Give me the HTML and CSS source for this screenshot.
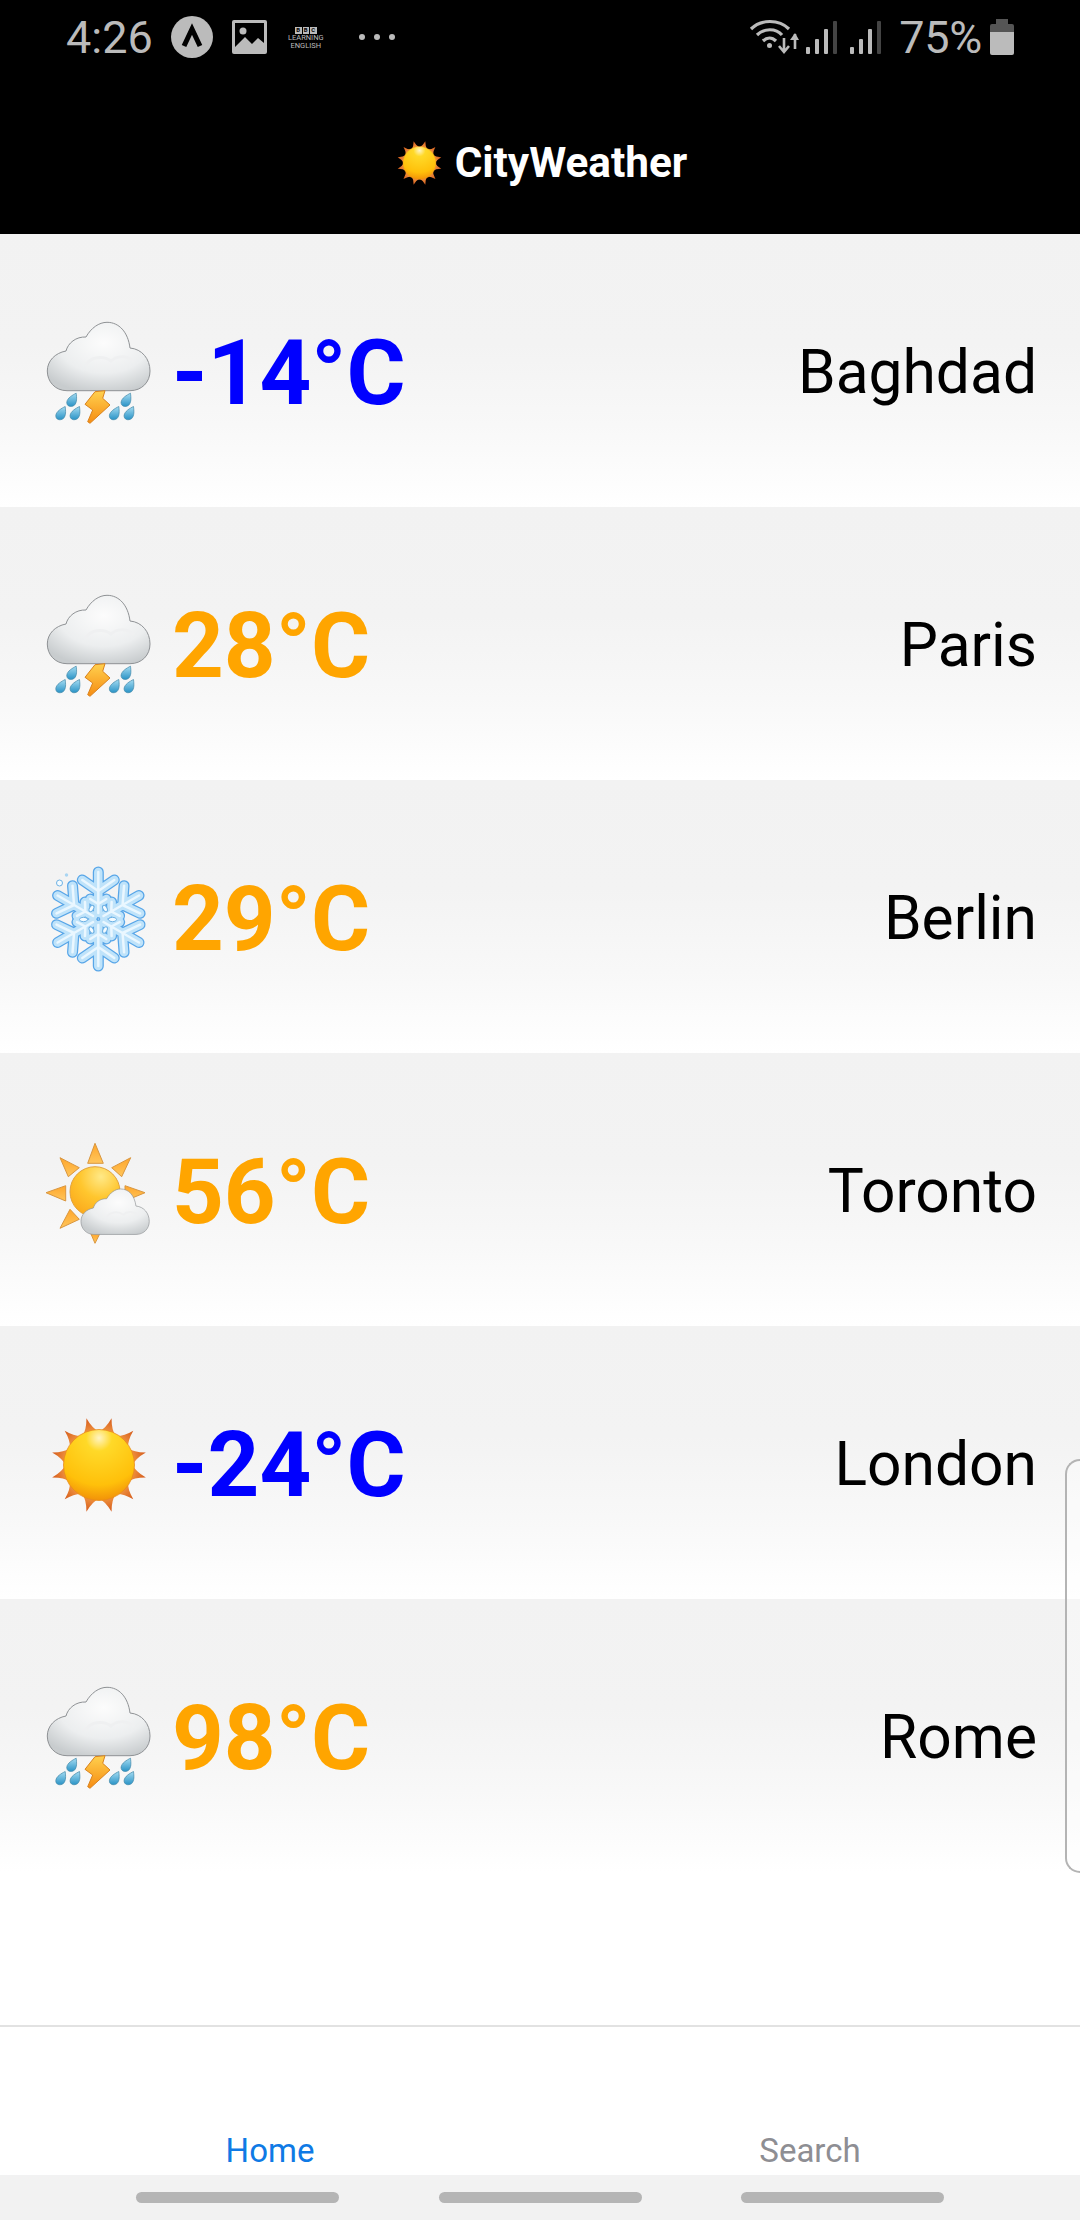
FILE: index.html
```html
<!DOCTYPE html>
<html lang="en">
<head>
<meta charset="utf-8">
<title>CityWeather</title>
<link rel="stylesheet" href="styles.css">
</head>
<body>
<svg class="defs" width="0" height="0" aria-hidden="true">
  <defs>
    <radialGradient id="cloudFill" cx="55%" cy="30%" r="74%">
      <stop offset="0" stop-color="#fcfcfc"/>
      <stop offset=".6" stop-color="#eceeef"/>
      <stop offset="1" stop-color="#c8ccce"/>
    </radialGradient>
    <linearGradient id="dropFill" x1="0" y1="0" x2="0" y2="1">
      <stop offset="0" stop-color="#a5dcf2"/>
      <stop offset="1" stop-color="#2a93c6"/>
    </linearGradient>
    <linearGradient id="boltFill" x1="0" y1="0" x2="0" y2="1">
      <stop offset="0" stop-color="#ffd14f"/>
      <stop offset="1" stop-color="#f68c12"/>
    </linearGradient>
    <radialGradient id="sunFill" cx="50%" cy="12%" r="92%">
      <stop offset="0" stop-color="#fff4c4"/>
      <stop offset=".2" stop-color="#ffd928"/>
      <stop offset=".72" stop-color="#ffc00a"/>
      <stop offset="1" stop-color="#f08a08"/>
    </radialGradient>
    <radialGradient id="sunPale" cx="62%" cy="20%" r="85%">
      <stop offset="0" stop-color="#ffe987"/>
      <stop offset=".5" stop-color="#ffc62e"/>
      <stop offset="1" stop-color="#fba91c"/>
    </radialGradient>
    <linearGradient id="rayFill" x1="0" y1="0" x2="0" y2="1">
      <stop offset="0" stop-color="#ffa62b"/>
      <stop offset="1" stop-color="#ffc65c"/>
    </linearGradient>
    <linearGradient id="spikeFill" x1="0" y1="0" x2="0" y2="1">
      <stop offset="0" stop-color="#d4591a"/>
      <stop offset="1" stop-color="#f39a45"/>
    </linearGradient>
    <path id="cloudShape" d="M27 75.700C15 75.700 7.300 66.500 7.300 56C7.300 46 15 38 26 36C28 28 36 21.500 46 22C51 13 59 7.300 67 7.300C79 7.300 88 17 90 33C102 34 110 44 110 56C110 67 102 75.700 90 75.700Z"/>
    <g id="cloud">
      <use href="#cloudShape" fill="url(#cloudFill)" stroke="#8f9295" stroke-width="1"/>
      <path d="M46 50C50 42 63 40 71 46C76 41 86 40 93 46" fill="none" stroke="#eff0f1" stroke-width="3" stroke-linecap="round"/>
    </g>
    <path id="drop" d="M4.500-7.500C5-3 5.500 1.500 2.700 4.500C-.7 7-5.200 5.600-4.900 1.500C-4.500-2.600.7-5.600 4.500-7.500Z" fill="url(#dropFill)" stroke="#3f87a8" stroke-width=".7"/>
    <symbol id="icStorm" viewBox="0 0 116 116">
      <use href="#cloud"/>
      <use href="#drop" x="31.700" y="85.700"/>
      <use href="#drop" x="20.700" y="99"/>
      <use href="#drop" x="35" y="99"/>
      <use href="#drop" x="86" y="85.700"/>
      <use href="#drop" x="74.300" y="99"/>
      <use href="#drop" x="89" y="99"/>
      <path d="M55 76.700L65 75.700L62.700 83.300L70 90L50 108.300L47.700 106.700L52.700 95L45 89.300Z" fill="url(#boltFill)" stroke="#d9821c" stroke-width="1" stroke-linejoin="round"/>
    </symbol>
    <path id="flakeArm" d="M0-6V-47M-16-39L0-28L16-39M-8-20L0-15L8-20"/>
    <g id="flakeAll">
      <use href="#flakeArm"/>
      <use href="#flakeArm" transform="rotate(60)"/>
      <use href="#flakeArm" transform="rotate(120)"/>
      <use href="#flakeArm" transform="rotate(180)"/>
      <use href="#flakeArm" transform="rotate(240)"/>
      <use href="#flakeArm" transform="rotate(300)"/>
    </g>
    <symbol id="icSnow" viewBox="0 0 116 116">
      <g transform="translate(58.300 58)" fill="none" stroke-linecap="round" stroke-linejoin="round">
        <use href="#flakeAll" stroke="#58a6e8" stroke-width="11"/>
        <use href="#flakeAll" stroke="#bfe3fa" stroke-width="8.500"/>
        <use href="#flakeAll" stroke="#eaf7ff" stroke-width="2.500"/>
      </g>
      <g fill="#f4fbff" stroke="#6fb2e4" stroke-width="1">
        <ellipse cx="51.500" cy="47.500" rx="2" ry="3.500" transform="rotate(30 51.500 47.500)"/>
        <ellipse cx="65" cy="47.500" rx="2" ry="3.500" transform="rotate(-30 65 47.500)"/>
        <ellipse cx="43.500" cy="58.500" rx="4" ry="2.200"/>
        <ellipse cx="72.500" cy="58.500" rx="4" ry="2.200"/>
        <ellipse cx="51.500" cy="69" rx="2" ry="3.500" transform="rotate(-30 51.500 69)"/>
        <ellipse cx="65" cy="69" rx="2" ry="3.500" transform="rotate(30 65 69)"/>
        <circle cx="19.500" cy="22" r="3"/>
      </g>
      <circle cx="26.500" cy="14" r="1.700" fill="#a9d5f2"/>
    </symbol>
    <symbol id="icPartly" viewBox="0 0 116 116">
      <g fill="url(#rayFill)" stroke="#d9963f" stroke-width="1" stroke-linejoin="round">
        <path d="M55 9.300L47.700 29.300H63.300Z"/>
        <path d="M20 23.700L39.300 33.700L28.300 42.700Z"/>
        <path d="M90.700 23.700L71.700 33.700L81.700 42.700Z"/>
        <path d="M6 58.700L25.700 51.700V67Z"/>
        <path d="M105 58.700L85 51.700V67Z"/>
        <path d="M20 94.300L30 75.300L39.300 85.300Z"/>
        <path d="M55 109.300L50.700 99.300H60Z"/>
      </g>
      <circle cx="55" cy="57.700" r="25" fill="url(#sunPale)" stroke="#e2a23c" stroke-width="1"/>
      <use href="#cloud" transform="translate(36.100 50.100) scale(.665)"/>
    </symbol>
    <path id="spike" d="M-9-32Q-3-37 0-48.500Q3-37 9-32Z" fill="url(#spikeFill)"/>
    <symbol id="icSun" viewBox="0 0 116 116">
      <g transform="translate(59 58)">
        <use href="#spike" transform="rotate(15)"/>
        <use href="#spike" transform="rotate(45)"/>
        <use href="#spike" transform="rotate(75)"/>
        <use href="#spike" transform="rotate(105)"/>
        <use href="#spike" transform="rotate(135)"/>
        <use href="#spike" transform="rotate(165)"/>
        <use href="#spike" transform="rotate(195)"/>
        <use href="#spike" transform="rotate(225)"/>
        <use href="#spike" transform="rotate(255)"/>
        <use href="#spike" transform="rotate(285)"/>
        <use href="#spike" transform="rotate(315)"/>
        <use href="#spike" transform="rotate(345)"/>
        <circle r="35.500" fill="url(#sunFill)" stroke="#e88a1c" stroke-width=".8"/>
      </g>
    </symbol>
  </defs>
</svg>

<header class="app-header">
  <div class="status">
    <div class="status-left">
      <span class="clock">4:26</span>
      <svg class="st-circle" viewBox="0 0 42 42"><circle cx="21" cy="21" r="21" fill="#bbb"/><path d="M13 30L21 13L29 30" fill="none" stroke="#000" stroke-width="5"/></svg>
      <svg class="st-image" viewBox="0 0 35 34"><rect width="35" height="34" rx="2" fill="#bbb"/><rect x="3" y="3" width="29" height="26" fill="#000"/><circle cx="11" cy="11" r="3.500" fill="#bbb"/><path d="M3 27L13 17L20 24L26 18L32 23V31H3Z" fill="#bbb"/></svg>
      <div class="bbc">
        <div class="bbc-logo"><span>B</span><span>B</span><span>C</span></div>
        <div>LEARNING</div>
        <div>ENGLISH</div>
      </div>
      <div class="dots"><i></i><i></i><i></i></div>
    </div>
    <div class="status-right">
      <svg class="st-wifi" viewBox="0 0 50 38">
        <g fill="none" stroke="#bbb" stroke-width="3.200">
          <path d="M2 11C12 1 30 1 40 11"/>
          <path d="M8 17C15 10 27 10 33 17"/>
          <path d="M14 23C18 19 23 19 27 23"/>
        </g>
        <circle cx="20.500" cy="27.500" r="2.500" fill="#bbb"/>
        <path d="M35 20V33M30 28L35 34L40 28M46 31V16" fill="none" stroke="#bbb" stroke-width="2.600"/>
        <path d="M41 22L46 15L50 22Z" fill="#bbb"/>
      </svg>
      <svg class="st-signal" viewBox="0 0 32 34"><g fill="#bbb"><rect y="27" width="4" height="7" rx="1"/><rect x="9" y="19" width="4" height="15" rx="1"/><rect x="18" y="9" width="4" height="25" rx="1"/></g><rect x="27" y="1" width="4" height="33" rx="1" fill="#444"/></svg>
      <svg class="st-signal" viewBox="0 0 32 34"><g fill="#bbb"><rect y="27" width="4" height="7" rx="1"/><rect x="9" y="19" width="4" height="15" rx="1"/><rect x="18" y="9" width="4" height="25" rx="1"/></g><rect x="27" y="1" width="4" height="33" rx="1" fill="#444"/></svg>
      <span class="percent">75%</span>
      <svg class="st-battery" viewBox="0 0 24 36"><path d="M6 0H18V5H22Q24 5 24 7V13H0V7Q0 5 2 5H6Z" fill="#555"/><path d="M0 13H24V34Q24 36 22 36H2Q0 36 0 34Z" fill="#bbb"/></svg>
    </div>
  </div>
  <div class="title-row">
    <svg class="title-sun"><use href="#icSun"/></svg>
    <h1 class="title">CityWeather</h1>
  </div>
</header>

<main class="list">
  <section class="row"><svg class="wx"><use href="#icStorm"/></svg><span class="temp cold">-14°C</span><span class="city">Baghdad</span></section>
  <section class="row"><svg class="wx"><use href="#icStorm"/></svg><span class="temp warm">28°C</span><span class="city">Paris</span></section>
  <section class="row"><svg class="wx"><use href="#icSnow"/></svg><span class="temp warm">29°C</span><span class="city">Berlin</span></section>
  <section class="row"><svg class="wx"><use href="#icPartly"/></svg><span class="temp warm">56°C</span><span class="city">Toronto</span></section>
  <section class="row"><svg class="wx"><use href="#icSun"/></svg><span class="temp cold">-24°C</span><span class="city">London</span></section>
  <section class="row"><svg class="wx"><use href="#icStorm"/></svg><span class="temp warm">98°C</span><span class="city">Rome</span></section>
</main>

<nav class="tabs">
  <span class="tab active">Home</span>
  <span class="tab">Search</span>
</nav>
<div class="softkeys"><i></i><i></i><i></i></div>
<div class="edge-handle"></div>
</body>
</html>
```
FILE: styles.css
```css
* { box-sizing: border-box; }
html, body { margin: 0; padding: 0; }
body {
  position: relative;
  width: 1080px;
  height: 2220px;
  display: flex;
  flex-direction: column;
  background: #fff;
  font-family: Roboto, "Liberation Sans", sans-serif;
  overflow: hidden;
}
.defs { position: absolute; }

.app-header {
  height: 234px;
  flex: none;
  background: #000;
  display: flex;
  flex-direction: column;
}
.status {
  height: 76px;
  padding: 0 66px;
  display: flex;
  justify-content: space-between;
  align-items: flex-start;
  color: #bbb;
}
.status-left, .status-right { display: flex; align-items: flex-start; }
.clock, .percent { font-size: 45px; line-height: 44px; margin-top: 16px; }
.percent { letter-spacing: -.3px; margin-left: 17px; }
.st-circle { width: 42px; height: 42px; margin: 16px 0 0 18px; }
.st-image { width: 35px; height: 34px; margin: 20px 0 0 19px; }
.bbc {
  width: 38px;
  margin: 27px 0 0 20px;
  font-size: 7.5px;
  line-height: 8px;
  text-align: center;
  white-space: nowrap;
  color: #bbb;
}
.bbc-logo { display: flex; justify-content: center; gap: 1px; height: 7px; }
.bbc-logo span {
  width: 6.500px;
  height: 6.500px;
  background: #bbb;
  color: #000;
  font-size: 6px;
  line-height: 6.500px;
  font-weight: 700;
}
.dots { display: flex; gap: 9px; margin: 34px 0 0 34px; }
.dots i { width: 6px; height: 6px; border-radius: 50%; background: #bbb; }
.st-wifi { width: 50px; height: 38px; margin-top: 18px; }
.st-signal { width: 32px; height: 34px; margin: 20px 0 0 7px; }
.st-signal + .st-signal { margin-left: 12px; }
.st-battery { width: 24px; height: 36px; margin: 19px 0 0 8px; }

.title-row {
  flex: 1;
  display: flex;
  align-items: center;
  justify-content: center;
  padding: 16px 1px 0 0;
  gap: 9px;
}
.title-sun { width: 54px; height: 54px; }
.title {
  margin: 0;
  color: #fff;
  font-size: 42.3px;
  line-height: 50px;
  font-weight: 700;
}

.list { flex: 1; }
.row {
  height: 273px;
  padding: 5px 43px 0 40px;
  display: flex;
  align-items: center;
  background: linear-gradient(#f2f2f2 0%, #f3f3f3 40%, #f8f8f8 70%, #fff 100%);
}
.wx { width: 116px; height: 116px; flex: none; }
.temp { font-size: 90.4px; line-height: 100px; font-weight: 700; margin-left: 16px; }
.cold { color: #00f; }
.warm { color: #ffa500; }
.city { margin-left: auto; font-size: 60.5px; line-height: 70px; color: #000; }

.tabs {
  height: 150px;
  flex: none;
  border-top: 2px solid #e2e2e2;
  display: grid;
  grid-template-columns: 1fr 1fr;
  align-items: end;
  justify-items: center;
  background: #fff;
}
.tab {
  font-size: 33px;
  line-height: 40px;
  color: #8e8e93;
  padding-bottom: 4px;
}
.active { color: #0f7ae5; }

.softkeys {
  height: 45px;
  flex: none;
  background: #f2f2f2;
  display: flex;
  padding: 17px 136px 0;
  justify-content: space-between;
}
.softkeys i { width: 203px; height: 11px; border-radius: 6px; background: #b5b5b5; }

.edge-handle {
  position: absolute;
  top: 1459px;
  right: 0;
  width: 15px;
  height: 414px;
  border: 2px solid #b4b4b4;
  border-right: 0;
  border-radius: 16px 0 0 16px;
  background: rgba(255, 255, 255, .35);
}
```
